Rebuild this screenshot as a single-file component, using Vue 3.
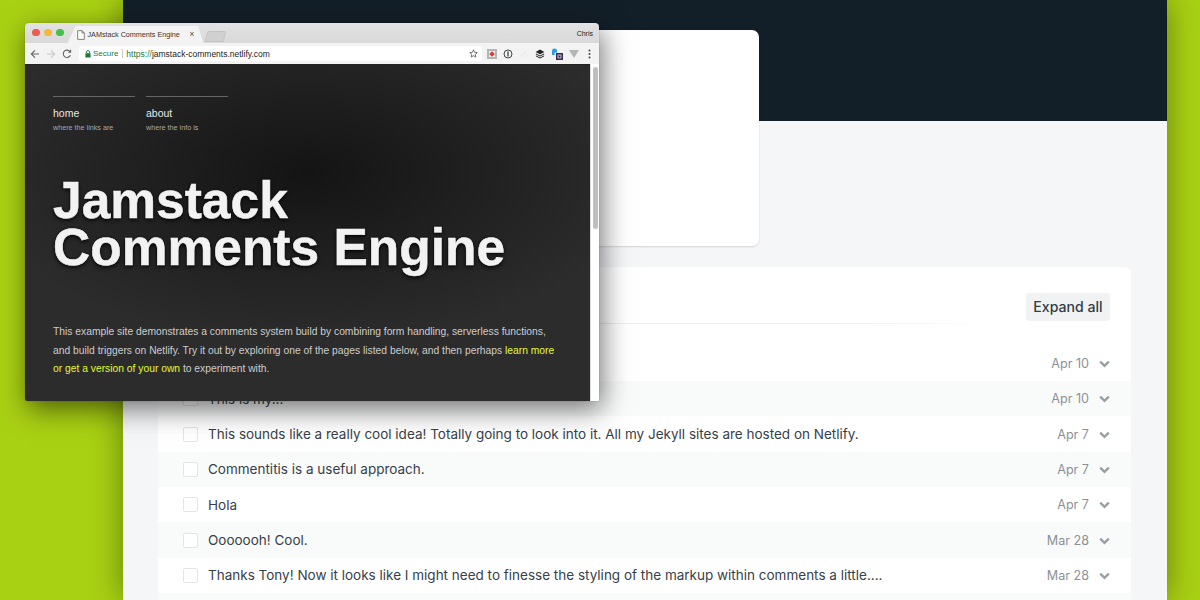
<script setup>
const rows = [
  { text: '', date: 'Apr 10' },
  { text: 'This is my...', date: 'Apr 10' },
  { text: 'This sounds like a really cool idea! Totally going to look into it. All my Jekyll sites are hosted on Netlify.', date: 'Apr 7' },
  { text: 'Commentitis is a useful approach.', date: 'Apr 7' },
  { text: 'Hola', date: 'Apr 7' },
  { text: 'Ooooooh! Cool.', date: 'Mar 28' },
  { text: 'Thanks Tony! Now it looks like I might need to finesse the styling of the markup within comments a little....', date: 'Mar 28' },
  { text: '', date: '' }
]
</script>

<template>
  <div class="stage">
    <main class="panel">
      <section class="summary"></section>
      <section class="comments">
        <header class="comments-head">
          <button class="expand">Expand all</button>
        </header>
        <ul class="rows">
          <li v-for="(row, i) in rows" :key="i" class="row">
            <template v-if="row.date">
              <span class="check"></span>
              <span class="text">{{ row.text }}</span>
              <span class="date">{{ row.date }}</span>
              <svg class="chev" width="11" height="8" viewBox="0 0 11 8"><path d="M1.2 1.6 5.5 5.8 9.8 1.6" fill="none" stroke="#9a9fa4" stroke-width="2.4"/></svg>
            </template>
          </li>
        </ul>
      </section>
    </main>

    <div class="window">
      <div class="titlebar">
        <div class="lights"><i class="red"></i><i class="yellow"></i><i class="green"></i></div>
        <div class="tab">
          <svg width="8" height="10" viewBox="0 0 8 10"><path d="M.7.6H5L7.3 3V9.4H.7Z M5 .6V3H7.3" fill="#fff" stroke="#666" stroke-width=".8"/></svg>
          <span class="tab-title">JAMstack Comments Engine</span>
          <span class="tab-x">×</span>
        </div>
        <div class="newtab"></div>
        <span class="user">Chris</span>
      </div>
      <div class="toolbar">
        <svg class="nav" width="10" height="10" viewBox="0 0 10 10"><path d="M9 5H1.5M5 1.3 1.3 5 5 8.7" fill="none" stroke="#666" stroke-width="1.1"/></svg>
        <svg class="nav" width="10" height="10" viewBox="0 0 10 10"><path d="M1 5H8.5M5 1.3 8.7 5 5 8.7" fill="none" stroke="#c8c8c8" stroke-width="1.1"/></svg>
        <svg class="nav" width="10" height="10" viewBox="0 0 10 10"><path d="M8.4 6.3A3.7 3.7 0 1 1 8 2.6M8.6.8V3.2H6.2" fill="none" stroke="#666" stroke-width="1.1"/></svg>
        <div class="omnibox">
          <svg width="6" height="8" viewBox="0 0 6 8"><path d="M.4 3.3H5.6V7.6H.4Z" fill="#1e7a3c"/><path d="M1.5 3.3V2a1.5 1.5 0 0 1 3 0V3.3" fill="none" stroke="#1e7a3c" stroke-width=".9"/></svg>
          <span class="secure">Secure</span>
          <span class="sep"></span>
          <span class="url"><span class="https">https://</span>jamstack-comments.netlify.com</span>
          <svg class="star" width="9" height="9" viewBox="0 0 10 10"><path d="M5 .9 6.2 3.7 9.2 4 6.9 6 7.6 9 5 7.4 2.4 9 3.1 6 .8 4 3.8 3.7Z" fill="none" stroke="#555" stroke-width=".9"/></svg>
        </div>
        <div class="exts">
          <svg width="10" height="10" viewBox="0 0 10 10"><rect width="10" height="10" fill="#b5b5b5"/><rect x="2" y="2" width="6" height="6" fill="#eee"/><path d="M5 2.200 7.800 5 5 7.800 2.200 5Z" fill="#d8402f"/></svg>
          <svg width="10" height="10" viewBox="0 0 10 10"><circle cx="5" cy="5" r="4" fill="none" stroke="#444" stroke-width="1"/><path d="M5 2.600V7.400" stroke="#444" stroke-width="1.300"/></svg>
          <svg width="10" height="10" viewBox="0 0 10 10"><path d="M2 7 8 2M6 8 8 6" stroke="#e9e9e9" stroke-width="1.200"/></svg>
          <svg width="10" height="10" viewBox="0 0 10 10"><path d="M5 .6 9.400 3 5 5.200.6 3Z" fill="#222"/><path d="M.9 4.900 5 7 9.100 4.900M.9 6.900 5 9 9.100 6.900" fill="none" stroke="#222" stroke-width="1"/></svg>
          <svg width="12" height="12" viewBox="0 0 12 12"><path d="M1 7V3a2.500 2.500 0 0 1 5 0v1.500H3.600V7Z" fill="#2a9be0"/><rect x="5" y="5" width="7" height="7" fill="#3c2a55"/><rect x="7" y="7" width="3" height="3" fill="none" stroke="#e4e0ea" stroke-width=".8"/></svg>
          <svg width="10" height="10" viewBox="0 0 10 10"><path d="M0 1H10L5 9Z" fill="#b4b6b4"/></svg>
          <svg class="dots" width="3" height="10" viewBox="0 0 3 10"><circle cx="1.500" cy="1.500" r="1" fill="#444"/><circle cx="1.500" cy="5" r="1" fill="#444"/><circle cx="1.500" cy="8.500" r="1" fill="#444"/></svg>
        </div>
      </div>
      <div class="viewport">
        <div class="page">
          <nav class="site-nav">
            <a class="nav-item"><b>home</b><small>where the links are</small></a>
            <a class="nav-item"><b>about</b><small>where the info is</small></a>
          </nav>
          <h1>Jamstack<br>Comments Engine</h1>
          <p>This example site demonstrates a comments system build by combining form handling, serverless functions, and build triggers on Netlify. Try it out by exploring one of the pages listed below, and then perhaps <em>learn more or get a version of your own</em> to experiment with.</p>
        </div>
        <div class="scrollbar"><span></span></div>
      </div>
    </div>
  </div>
</template>

<style>
html, body { margin: 0; }
</style>

<style scoped>
.stage {
  position: relative;
  width: 1200px;
  height: 600px;
  overflow: hidden;
  background: #a9d113;
  padding-left: 123px;
  box-sizing: border-box;
  font-family: Inter, "Liberation Sans", sans-serif;
}
.panel {
  width: 1044px;
  height: 600px;
  box-sizing: border-box;
  padding: 30px 36px 0 35px;
  background: linear-gradient(#131f28 121px, #f5f6f8 121px);
  box-shadow: 0 0 30px rgba(0, 0, 0, .4);
  overflow: hidden;
}
.summary {
  width: 601px;
  height: 216px;
  background: #fff;
  border-radius: 7px;
  box-shadow: 0 1px 2px rgba(0, 0, 0, .14);
}
.comments {
  margin-top: 21px;
  background: #fff;
  border-radius: 6px 6px 0 0;
  height: 400px;
}
.comments-head {
  height: 78.8px;
  box-sizing: border-box;
  padding: 26px 21px 0 0;
  display: flex;
  justify-content: flex-end;
  align-items: flex-start;
  position: relative;
}
.comments-head::after {
  content: "";
  position: absolute;
  left: 21px;
  right: 130px;
  top: 56px;
  height: 1px;
  background: linear-gradient(90deg, #eceef0 80%, #fff);
}
.expand {
  width: 84px;
  height: 28px;
  padding: 0;
  border: 0;
  border-radius: 3px;
  background: #f1f2f4;
  color: #333d46;
  font: 500 14.1px/28px Inter, "Liberation Sans", sans-serif;
}
.rows { list-style: none; margin: 0; padding: 0; }
.row {
  height: 35.33px;
  display: flex;
  align-items: center;
  padding: 0 21px 0 25px;
  box-sizing: border-box;
  color: #37414a;
  font-size: 13.5px;
}
.row:nth-child(even) { background: #f9fafa; }
.check {
  width: 13px;
  height: 13px;
  border: 1px solid #e3e5e7;
  border-radius: 2px;
  background: #fff;
  margin-right: 10px;
  flex: none;
}
.text { flex: 1; white-space: nowrap; }
.date { color: #8b9196; font-size: 12.6px; }
.chev { margin-left: 10px; flex: none; margin-top: 1px; }

.window {
  position: absolute;
  left: 25px;
  top: 23px;
  width: 574px;
  height: 378px;
  display: flex;
  flex-direction: column;
  border-radius: 4px 4px 2px 2px;
  overflow: hidden;
  box-shadow: 0 0 1px rgba(0,0,0,.5);
  font-family: "Liberation Sans", Arial, sans-serif;
}
.stage::after {
  content: "";
  position: absolute;
  left: 25px;
  top: 23px;
  width: 574px;
  height: 378px;
  box-shadow: 3px 8px 26px rgba(0, 0, 0, .55);
  pointer-events: none;
}
.titlebar {
  height: 20px;
  flex: none;
  display: flex;
  align-items: flex-end;
  background: linear-gradient(#e2e2e2, #d9d9d9);
  padding-left: 7px;
  box-sizing: border-box;
  position: relative;
}
.lights { display: flex; gap: 4.500px; align-self: center; margin-right: 4px; margin-top: -1px; }
.lights i { width: 7.500px; height: 7.500px; border-radius: 50%; }
.red { background: #ee5b50; }
.yellow { background: #f4b83a; }
.green { background: #45c04a; }
.tab {
  width: 136px;
  height: 17px;
  background: #f3f3f3;
  clip-path: polygon(0 100%, 6% 0, 96% 0, 100% 100%);
  display: flex;
  align-items: center;
  gap: 3px;
  padding-left: 9px;
  box-sizing: border-box;
}
.tab-title { font-size: 7.2px; color: #333; white-space: nowrap; flex: 1; }
.tab-x { font-size: 9px; color: #555; margin-right: 9px; line-height: 1; }
.newtab {
  width: 17px;
  height: 9px;
  margin: 0 0 1px 2px;
  background: #d0d0d0;
  border: 1px solid #c4c4c4;
  border-radius: 2px 2px 0 0;
  transform: skewX(-14deg);
}
.user {
  margin-left: auto;
  align-self: center;
  margin-right: 6px;
  font-size: 7px;
  color: #222;
}
.toolbar {
  height: 21px;
  flex: none;
  display: flex;
  align-items: center;
  background: #f3f3f3;
  padding-left: 5px;
  box-sizing: border-box;
}
.nav { margin-right: 6px; flex: none; }
.omnibox {
  width: 403px;
  height: 15px;
  flex: none;
  margin-left: 1px;
  background: #fff;
  border-radius: 2px;
  display: flex;
  align-items: center;
  padding: 0 4px 0 6px;
  box-sizing: border-box;
  font-size: 8.5px;
}
.secure { color: #1e7a3c; margin-left: 2px; font-size: 8px; }
.sep { width: 1px; height: 9px; background: #ccc; margin: 0 3px 0 4px; }
.url { color: #222; flex: 1; white-space: nowrap; }
.https { color: #1e7a3c; }
.exts {
  display: flex;
  align-items: center;
  gap: 6px;
  margin-left: 5px;
}
.dots { margin-left: 3px; }
.viewport {
  flex: 1;
  display: flex;
  min-height: 0;
}
.page {
  flex: 1;
  background:
    radial-gradient(ellipse 340px 170px at 50% 32%, #141414, rgba(20, 20, 20, 0)),
    #2c2c2c;
  padding: 31px 30px 0 28px;
  box-sizing: border-box;
  color: #eee;
  border-top: 1px solid #222;
}
.site-nav { display: flex; gap: 11px; }
.nav-item {
  width: 82px;
  border-top: 1px solid #666;
  padding-top: 10px;
  display: flex;
  flex-direction: column;
}
.nav-item b { font-weight: 400; font-size: 10.5px; line-height: 13px; color: #e6e6e6; }
.nav-item small { font-size: 7.2px; line-height: 10px; margin-top: 3px; color: #a8a8a8; white-space: nowrap; }
h1 {
  margin: 44px 0 0;
  font-size: 51.5px;
  line-height: 47px;
  font-weight: 700;
  color: #f2f2f2;
  white-space: nowrap;
  -webkit-text-stroke: .5px #f2f2f2;
  text-shadow: 0 0 2px #000, 0 2px 4px rgba(0, 0, 0, .8);
}
p {
  margin: 52px 0 0;
  font-size: 10.3px;
  line-height: 18.500px;
  color: #cdcdcd;
}
em { font-style: normal; color: #e2fb2c; }
.scrollbar {
  width: 9px;
  flex: none;
  background: #fff;
  border-left: 1px solid #ddd;
  box-sizing: border-box;
  padding: 3px 1px 0 2px;
}
.scrollbar span {
  display: block;
  height: 162px;
  background: #bfbfbf;
  border-radius: 3px;
}
</style>
